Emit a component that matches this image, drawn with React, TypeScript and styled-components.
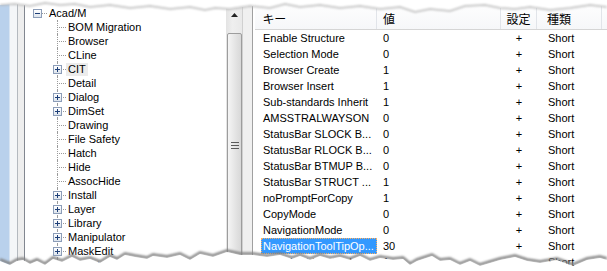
import React from "react";
import styled, { createGlobalStyle } from "styled-components";

const GlobalStyle = createGlobalStyle`
  html, body {
    margin: 0;
    padding: 0;
    background: #fff;
  }
  body {
    font-family: "Liberation Sans", Arial, sans-serif;
  }
`;

type TreeItem = { label: string; level: number; expander?: "plus" | "minus"; active?: boolean };

const treeItems: TreeItem[] = [
  { label: "Acad/M", level: 0, expander: "minus" },
  { label: "BOM Migration", level: 1 },
  { label: "Browser", level: 1 },
  { label: "CLine", level: 1 },
  { label: "CIT", level: 1, expander: "plus", active: true },
  { label: "Detail", level: 1 },
  { label: "Dialog", level: 1, expander: "plus" },
  { label: "DimSet", level: 1, expander: "plus" },
  { label: "Drawing", level: 1 },
  { label: "File Safety", level: 1 },
  { label: "Hatch", level: 1 },
  { label: "Hide", level: 1 },
  { label: "AssocHide", level: 1 },
  { label: "Install", level: 1, expander: "plus" },
  { label: "Layer", level: 1, expander: "plus" },
  { label: "Library", level: 1, expander: "plus" },
  { label: "Manipulator", level: 1, expander: "plus" },
  { label: "MaskEdit", level: 1, expander: "plus" },
  { label: "Object", level: 1 },
];

const entries = [
  { key: "Enable Structure", value: "0" },
  { key: "Selection Mode", value: "0" },
  { key: "Browser Create", value: "1" },
  { key: "Browser Insert", value: "1" },
  { key: "Sub-standards Inherit", value: "1" },
  { key: "AMSSTRALWAYSON", value: "0" },
  { key: "StatusBar SLOCK B...", value: "0" },
  { key: "StatusBar RLOCK B...", value: "0" },
  { key: "StatusBar BTMUP B...", value: "0" },
  { key: "StatusBar STRUCT ...", value: "1" },
  { key: "noPromptForCopy", value: "1" },
  { key: "CopyMode", value: "0" },
  { key: "NavigationMode", value: "0" },
  { key: "NavigationToolTipOp...", value: "30", selected: true },
  { key: "IncludeStdPartsInV...", value: "1" },
];

const bottomTear = [
  [0, 258], [10, 262], [17, 258], [23, 257], [30, 261], [37, 258], [45, 262], [53, 256],
  [62, 259], [72, 254], [80, 258], [90, 256], [100, 260], [110, 254], [117, 257], [125, 252],
  [135, 254], [147, 256], [153, 253], [167, 255], [180, 252], [190, 257], [200, 251], [213, 254],
  [227, 249], [240, 252], [253, 252], [267, 254], [280, 252], [292, 256], [300, 253], [310, 257],
  [320, 253], [330, 256], [340, 254], [350, 257], [360, 253], [370, 258], [380, 255], [393, 257],
  [403, 256], [410, 262], [417, 258], [432, 253], [440, 258], [450, 257], [460, 262], [470, 258],
  [480, 263], [490, 260], [500, 257], [515, 254], [527, 258], [540, 260], [557, 257], [573, 263],
  [587, 257], [600, 255], [607, 257],
];

const topTear = [
  [0, 5], [15, 4], [30, 6], [45, 3], [60, 5], [75, 4], [90, 7], [110, 5], [130, 8], [150, 6],
  [170, 9], [190, 7], [205, 10], [215, 8], [230, 9], [250, 6], [270, 8], [285, 4], [300, 7],
  [320, 5], [340, 8], [360, 6], [380, 9], [400, 7], [415, 12], [430, 9], [450, 11], [465, 6],
  [485, 5], [500, 8], [515, 9], [530, 7], [550, 10], [570, 8], [590, 5], [607, 7],
];

const pts = (list: number[][]) => list.map((p) => p.join(",")).join(" ");

const App: React.FC = () => {
  return (
    <Screen>
      <GlobalStyle />
      <Window>
        <FrameEdge />
        <TreePane>
          {treeItems.map((item, index) => (
            <TreeRow key={index} $level={item.level}>
              <Gutter $branch={item.level > 0}>
                {item.expander && (
                  <Expander $level={item.level}>
                    <svg width="7" height="7" viewBox="0 0 7 7">
                      <rect x="1" y="3" width="5" height="1" fill="#1e3f78" />
                      {item.expander === "plus" && <rect x="3" y="1" width="1" height="5" fill="#1e3f78" />}
                    </svg>
                  </Expander>
                )}
              </Gutter>
              <TreeLabel $active={item.active}>{item.label}</TreeLabel>
            </TreeRow>
          ))}
        </TreePane>
        <ScrollBar>
          <ArrowButton>
            <svg width="7" height="4" viewBox="0 0 7 4">
              <polygon points="3.5,0 7,4 0,4" fill="#222" />
            </svg>
          </ArrowButton>
          <Thumb>
            <svg width="8" height="7" viewBox="0 0 8 7">
              <rect x="0" y="0" width="8" height="1" fill="#5a5a5a" />
              <rect x="0" y="3" width="8" height="1" fill="#5a5a5a" />
              <rect x="0" y="6" width="8" height="1" fill="#5a5a5a" />
            </svg>
          </Thumb>
        </ScrollBar>
        <Splitter />
        <ListPane>
          <HeaderRow>
            <HeaderCell $pad={8}>キー</HeaderCell>
            <HeaderCell $pad={6}>値</HeaderCell>
            <HeaderCell $center>設定</HeaderCell>
            <HeaderCell $pad={10}>種類</HeaderCell>
            <HeaderCell $pad={6} />
          </HeaderRow>
          {entries.map((row, index) => (
            <ListRow key={index}>
              <KeyCell>
                <KeyText $selected={row.selected}>{row.key}</KeyText>
              </KeyCell>
              <Cell $pad={6}>{row.value}</Cell>
              <Cell $center>+</Cell>
              <Cell $pad={11}>Short</Cell>
              <Cell $pad={6} />
            </ListRow>
          ))}
        </ListPane>
      </Window>
      <TearOverlay width="607" height="271" viewBox="0 0 607 271">
        <defs>
          <filter id="soft" x="-5%" y="-50%" width="110%" height="200%">
            <feGaussianBlur stdDeviation="0.8" />
          </filter>
        </defs>
        <polygon points={`0,0 ${pts(topTear)} 607,0`} fill="#fff" />
        <polyline points={pts(topTear)} fill="none" stroke="#b8b8b8" strokeWidth="1.5" filter="url(#soft)" />
        <polyline
          points={pts(bottomTear.map(([x, y]) => [x, y + 1.5]))}
          fill="none"
          stroke="#808080"
          strokeWidth="2.5"
          filter="url(#soft)"
        />
        <polygon points={`0,271 ${pts(bottomTear.map(([x, y]) => [x, y + 3]))} 607,271`} fill="#fff" />
      </TearOverlay>
    </Screen>
  );
};

const Screen = styled.div`
  position: relative;
  width: 607px;
  height: 271px;
  overflow: hidden;
  background: #fff;
`;

const Window = styled.div`
  display: flex;
  height: 100%;
`;

const FrameEdge = styled.div`
  flex: none;
  width: 25px;
  background: linear-gradient(
    to right,
    #b9d1ec 0 9px,
    #d7e4f2 9px 10px,
    #f4f6f8 10px 17px,
    #b4b9bf 17px 18px,
    #eeeeee 18px 24px,
    #828790 24px 25px
  );
`;

const TreePane = styled.div`
  flex: none;
  width: 201px;
  padding-top: 6px;
  background: #fff;
  overflow: hidden;
  font-size: 11px;
  color: #000;
`;

const TreeRow = styled.div<{ $level: number }>`
  display: flex;
  align-items: center;
  height: 14px;
  padding-left: ${(p) => (p.$level === 0 ? 8 : 27)}px;
`;

const Gutter = styled.div<{ $branch: boolean }>`
  position: relative;
  flex: none;
  width: 14px;
  height: 14px;
  &::before {
    content: "";
    display: ${(p) => (p.$branch ? "block" : "none")};
    position: absolute;
    left: 5px;
    top: 0;
    bottom: 0;
    border-left: 1px dotted #9a9a9a;
  }
  &::after {
    content: "";
    position: absolute;
    left: 5px;
    right: 0;
    top: 7px;
    border-top: 1px dotted #9a9a9a;
  }
`;

const Expander = styled.div<{ $level: number }>`
  position: absolute;
  z-index: 1;
  left: ${(p) => (p.$level === 0 ? 0 : 1)}px;
  top: 3px;
  width: 7px;
  height: 7px;
  display: flex;
  border: 1px solid #8c9db8;
  background: linear-gradient(#ffffff, #dde4ec);
`;

const TreeLabel = styled.span<{ $active?: boolean }>`
  padding: 0 2px;
  line-height: 13px;
  white-space: nowrap;
  background: ${(p) => (p.$active ? "#ececec" : "transparent")};
`;

const ScrollBar = styled.div`
  flex: none;
  width: 17px;
  display: flex;
  flex-direction: column;
  background: linear-gradient(to right, #e3e3e3, #efefef 40%, #e9e9e9);
  border-right: 1px solid #d0d0d0;
  box-sizing: border-box;
`;

const ArrowButton = styled.div`
  flex: none;
  height: 29px;
  display: flex;
  align-items: center;
  justify-content: center;
  padding-top: 1px;
  box-sizing: border-box;
`;

const Thumb = styled.div`
  flex: none;
  margin: 4px 0 0 1px;
  width: 15px;
  height: 224px;
  box-sizing: border-box;
  border: 1px solid #9d9d9d;
  border-radius: 2px;
  background: linear-gradient(to right, #f5f5f5, #e6e6e6 50%, #d8d8d8);
  display: flex;
  align-items: center;
  justify-content: center;
`;

const Splitter = styled.div`
  flex: none;
  width: 9px;
  background: #f0f0f0;
`;

const ListPane = styled.div`
  flex: 1;
  border-left: 1px solid #a0a0a0;
  padding-left: 2px;
  background: #fff;
  font-size: 11px;
  color: #000;
  overflow: hidden;
`;

const columns = "122px 124px 36px 65px 1fr";

const HeaderRow = styled.div`
  display: grid;
  grid-template-columns: ${columns};
  height: 30px;
  box-sizing: border-box;
  border-bottom: 1px solid #d5d5d5;
  background: linear-gradient(#ffffff, #f6f7f9);
`;

const HeaderCell = styled.div<{ $pad?: number; $center?: boolean }>`
  padding-top: 11px;
  padding-left: ${(p) => p.$pad ?? 0}px;
  text-align: ${(p) => (p.$center ? "center" : "left")};
  border-right: 1px solid #e1e4e9;
  font-family: "Noto Sans CJK JP", sans-serif;
  font-size: 12px;
  line-height: 16px;
  font-feature-settings: "palt";
  white-space: nowrap;
`;

const ListRow = styled.div`
  display: grid;
  grid-template-columns: ${columns};
  height: 16px;
  line-height: 16px;
`;

const KeyCell = styled.div`
  padding-left: 6px;
  overflow: hidden;
`;

const KeyText = styled.div<{ $selected?: boolean }>`
  height: 16px;
  padding-left: 2px;
  white-space: nowrap;
  overflow: hidden;
  background: ${(p) => (p.$selected ? "#3399ff" : "transparent")};
  color: ${(p) => (p.$selected ? "#fff" : "#000")};
  outline: ${(p) => (p.$selected ? "1px dotted #ffb060" : "none")};
  outline-offset: -1px;
`;

const Cell = styled.div<{ $pad?: number; $center?: boolean }>`
  padding-left: ${(p) => p.$pad ?? 0}px;
  text-align: ${(p) => (p.$center ? "center" : "left")};
  white-space: nowrap;
  overflow: hidden;
`;

const TearOverlay = styled.svg`
  position: absolute;
  left: 0;
  top: 0;
  pointer-events: none;
`;

export default App;
